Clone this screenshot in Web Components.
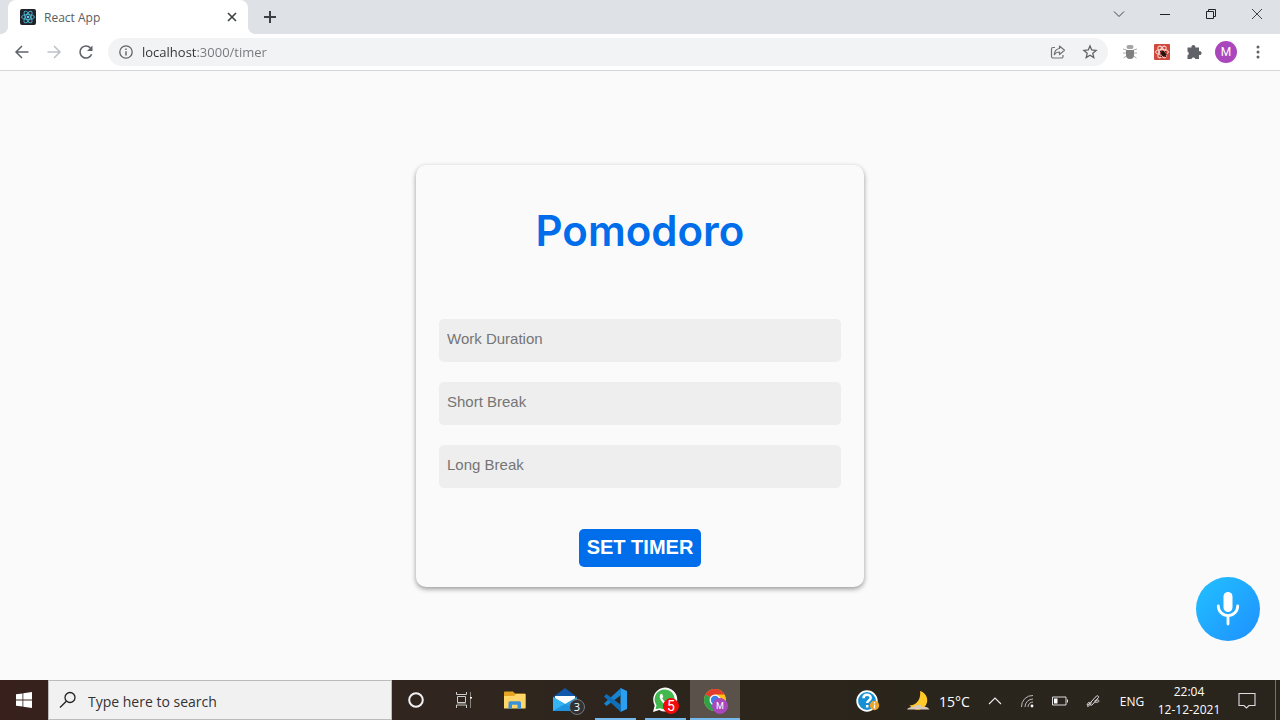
<!DOCTYPE html>
<html lang="en">
<head>
<meta charset="utf-8">
<title>React App</title>
<style>
  body {
    margin: 0;
    min-height: 100vh;
    display: flex;
    flex-direction: column;
    background: #fafafa;
    font-family: 'Open Sans', 'Noto Sans', sans-serif;
  }
</style>
</head>
<body>
<tab-strip>React App</tab-strip>
<browser-toolbar url="localhost:3000/timer"></browser-toolbar>
<timer-page>
  <timer-card heading="Pomodoro">
    <timer-field name="work" label="Work Duration"></timer-field>
    <timer-field name="short" label="Short Break"></timer-field>
    <timer-field name="long" label="Long Break"></timer-field>
    <span slot="action">SET TIMER</span>
  </timer-card>
</timer-page>
<task-bar>
  <task-app label="File Explorer" icon="explorer"></task-app>
  <task-app label="Mail" icon="mail" badge="3"></task-app>
  <task-app label="Visual Studio Code" icon="vscode" open></task-app>
  <task-app label="WhatsApp" icon="whatsapp" badge="5" alert open></task-app>
  <task-app label="Google Chrome" icon="chrome" badge="M" profile active></task-app>
</task-bar>

<script>
const svg = (w, h, body, attrs = '') =>
  `<svg width="${w}" height="${h}" viewBox="0 0 ${w} ${h}" fill="none" aria-hidden="true" ${attrs}>${body}</svg>`;

const icons = {
  react: svg(16, 16, `<rect width="16" height="16" rx="2" fill="#20232a"/><g stroke="#4fb4d0" stroke-width=".9"><ellipse cx="8" cy="8" rx="6.5" ry="2.5"/><ellipse cx="8" cy="8" rx="6.5" ry="2.5" transform="rotate(60 8 8)"/><ellipse cx="8" cy="8" rx="6.5" ry="2.5" transform="rotate(120 8 8)"/></g><circle cx="8" cy="8" r="1.3" fill="#5ed3f3"/>`),
  close: svg(10, 10, `<path d="M1 1l8 8M9 1L1 9" stroke="#3c4043" stroke-width="1.6"/>`),
  plus: svg(12, 12, `<path d="M6 0v12M0 6h12" stroke="#3c4043" stroke-width="2"/>`),
  chevron: svg(12, 8, `<path d="M1 1.5l5 5 5-5" stroke="#444"/>`),
  minimize: svg(10, 10, `<path d="M0 5.5h10" stroke="#222"/>`),
  restore: svg(12, 12, `<path d="M1.5 3.5h7v7h-7zM3.5 3.5v-2h7v7h-2" stroke="#222"/>`),
  exit: svg(12, 12, `<path d="M1 1l10 10M11 1L1 11" stroke="#444"/>`),
  back: svg(16, 16, `<path d="M14.5 8H2.5M8 2L2 8l6 6" stroke="#5f6368" stroke-width="1.5"/>`),
  forward: svg(16, 16, `<path d="M1.5 8h12M8 2l6 6-6 6" stroke="#bdc1c6" stroke-width="1.5"/>`),
  reload: svg(16, 16, `<path d="M13.6 10.2A6 6 0 1 1 12.4 3.9" stroke="#5f6368" stroke-width="1.6"/><path d="M14.5 1.500v5.500H9z" fill="#5f6368"/>`),
  info: svg(14, 14, `<circle cx="7" cy="7" r="6.2" stroke="#5f6368" stroke-width="1.3"/><path d="M7 6.2v4.300M7 3.500v1.500" stroke="#5f6368" stroke-width="1.4"/>`),
  share: svg(16, 16, `<path d="M5 3.5H3A1.5 1.5 0 0 0 1.500 5v7.500A1.500 1.500 0 0 0 3 14h8.500a1.500 1.500 0 0 0 1.500-1.500V11" stroke="#70747a" stroke-width="1.2"/><path d="M9.500 2l5 4.300-5 4.200V8C7 8 5.500 8.800 4.300 10.700 4.500 7.500 6.200 5 9.500 4.500z" stroke="#70747a" stroke-width="1.2" stroke-linejoin="round"/>`),
  star: svg(16, 16, `<path d="M8 2l1.700 4 4.400.4-3.300 2.900 1 4.300L8 11.300l-3.800 2.300 1-4.300-3.300-2.900L6.300 6z" stroke="#5f6368" stroke-width="1.300"/>`),
  bug: svg(16, 16, `<path d="M4.500 6L1 5M4 9H1M4.500 12l-3 2M11.500 6L15 5M12 9h3M11.500 12l3 2" stroke="#aaa"/><rect x="4.500" y="1" width="7" height="4" rx="2" fill="#a5a5a5"/><path d="M4 6h8v5a4 4 0 0 1-8 0z" fill="#808080"/>`),
  reactDev: svg(16, 16, `<rect width="16" height="16" rx="1" fill="#d1483b"/><g stroke="#f8d8d4"><ellipse cx="8" cy="8" rx="6.500" ry="2.600"/><ellipse cx="8" cy="8" rx="6.500" ry="2.600" transform="rotate(60 8 8)"/><ellipse cx="8" cy="8" rx="6.500" ry="2.600" transform="rotate(120 8 8)"/></g><path d="M6 7l6 6M12 7l-5 6M6 10h7" stroke="#2a1210"/><ellipse cx="9.500" cy="9.700" rx="2.200" ry="3" transform="rotate(-35 9.500 9.700)" fill="#2a1210"/>`),
  puzzle: svg(16, 16, `<path d="M2 3.500h3.500a2 2 0 1 1 3.800 0H13V7.200a2 2 0 1 1 0 3.800v4H9.300a2 2 0 0 0-3.800 0H1.500v-3.700a2 2 0 0 0 0-3.700V3.500z" fill="#5f6368"/>`),
  dots: svg(4, 16, `<g fill="#5f6368"><circle cx="2" cy="3" r="1.500"/><circle cx="2" cy="8" r="1.500"/><circle cx="2" cy="13" r="1.500"/></g>`),
  mic: svg(24, 36, `<rect x="7.500" y="1" width="9" height="20" rx="4.500" fill="#fff"/><path d="M2.300 15a9.700 9.700 0 0 0 19.400 0M12 25v8" stroke="#fff" stroke-width="2.800" stroke-linecap="round"/>`),
  windows: svg(16, 16, `<path d="M0 2.300L6.500 1.400v6.200H0zM7.300 1.300L16 0v7.600H7.300zM0 8.400h6.500v6.200L0 13.700zM7.300 8.400H16V16l-8.700-1.300z" fill="#fff"/>`),
  search: svg(18, 18, `<circle cx="11" cy="6.500" r="5" stroke="#222" stroke-width="1.300"/><path d="M7.300 10.200L1 16.500" stroke="#222" stroke-width="1.300"/>`),
  cortana: svg(18, 18, `<circle cx="9" cy="9" r="6.800" stroke="#f2f2f2" stroke-width="2"/>`),
  taskView: svg(18, 18, `<path d="M1.500 1v2.500h10V1M2.500 5.500h8v6h-8zM1.500 17v-3h10v3" stroke="#ccc"/><path d="M2 12h9v2H2z" fill="#77706a"/><path d="M15.500 1v16" stroke="#8b857f"/><path d="M15 6h2v1.500h-2z" fill="#fff"/>`),
  explorer: svg(22, 18, `<path d="M0 1.500A1 1 0 0 1 1 .5h8l2 2h9.500a1 1 0 0 1 1 1V17H0z" fill="#e5a523"/><path d="M0 5h10l2-2h9.500v14.500H0z" fill="#ffd667"/><path d="M4.500 17.800v-6A1.500 1.500 0 0 1 6 10.300h9.500a1.500 1.500 0 0 1 1.500 1.500v6h-3.500v-4H8v4z" fill="#3c91d7"/>`),
  mail: svg(26, 24, `<path d="M1 9L13 0l12 9v4H1z" fill="#0d58a8"/><path d="M3 8h20v9H3z" fill="#fff"/><path d="M1 9l12 7 12-7v14H1z" fill="#2aa3e8"/><path d="M1 23V9l12 7z" fill="#35b4f2"/><path d="M1 23l12-7 12 7z" fill="#1f93dd"/>`),
  vscode: svg(26, 26, `<path d="M18.500 1L25 4v18l-6.500 3z" fill="#2a9ff0"/><path d="M19 1L2 16.500l2.500 2.500L19 8z" fill="#1684d0"/><path d="M19 25L2 9.500 4.500 7 19 18z" fill="#0f70b7"/>`),
  whatsapp: svg(26, 26, `<path d="M1 25l1.700-6.600A12 12 0 1 1 7.200 23z" fill="#fff"/><path d="M3.500 22.300l1-4A10 10 0 1 1 8 21.300z" fill="#41b94e"/><path d="M8.300 7.200c.8-.9 1.700-.7 2.100.3l.8 2c.2.600-.9 1.500-.9 1.800 1 2.100 2.500 3.500 4.600 4.200.5-.2 1.200-1.600 1.900-1.300l2.100 1c1 .6.300 2.300-.9 2.900-4.500 2-12.600-6.300-9.700-10.900z" fill="#fff"/>`),
  chrome: svg(24, 24, `<circle cx="12" cy="12" r="11" fill="#fbc116"/><path d="M12 12L2.500 6.500A11 11 0 0 1 21.500 6.500H12z" fill="#e33b2e"/><path d="M12 12L2.500 6.500A11 11 0 0 0 11 23l5-8.500z" fill="#2ba24c"/><circle cx="12" cy="12" r="5.500" fill="#fff"/><circle cx="12" cy="12" r="4.200" fill="#3f7ee8"/>`),
  help: svg(24, 24, `<circle cx="11" cy="12" r="9.800" fill="#168fd4" stroke="#fff" stroke-width="1.800"/><path d="M7.500 9.300c0-4.600 7.200-4.600 7.200-.5 0 2.600-3.500 2.700-3.500 5.200M11.200 16v2.500" stroke="#fff" stroke-width="2.500"/><circle cx="18.500" cy="16.500" r="4.700" fill="#e9a52b"/><path d="M18.500 15.500v4M18.500 13v1.500" stroke="#fff" stroke-width="1.300"/>`),
  moon: svg(24, 20, `<path d="M13 0a9.500 9.500 0 1 1-10.500 14C8 15.500 14.500 9 13 0z" fill="#ffc928"/><path d="M0 18.500c1-2 5-3 6.500-2 2-3.500 7.500-3.500 9-.5 3-1 6 .5 7 2.500z" fill="#d9c9b8"/>`),
  caret: svg(14, 8, `<path d="M1 7l6-6 6 6" stroke="#eee" stroke-width="1.100"/>`),
  wifi: svg(14, 14, `<path d="M1.500 13A11 11 0 0 1 13 1.500M5 13a8 8 0 0 1 8-8M8 13a5 5 0 0 1 5-5" stroke="#bbb"/><circle cx="12" cy="12" r="1.400" fill="#fff"/>`),
  battery: svg(16, 10, `<path d="M.5 1h13.500v8H.5zM15.500 3.500v3" stroke="#ddd"/><path d="M2 2.500h3.500v5H2z" fill="#fff"/>`),
  pen: svg(14, 14, `<path d="M1 11c2-5 4-2 2.500 0-2 3.500-3.500.5 1-2.500l6-6.500c1-1 2.800.5 1.800 1.700L7 10c-3 3-3 .5-1.500-1.500M8.500 7c2-1.500 5-1 4.500.2-.5 1.300-2.500 1-4.500 1" stroke="#ddd"/>`),
  notice: svg(18, 18, `<path d="M1 1.500h16v12h-6L8.500 16 6 13.500H1z" stroke="#ddd" stroke-width="1.100"/>`)
};

const buttonReset = `
  * { box-sizing: border-box; }
  button {
    display: flex;
    align-items: center;
    justify-content: center;
    flex: none;
    margin: 0;
    padding: 0;
    border: 0;
    background: none;
    font: inherit;
    color: inherit;
  }
  svg { display: block; flex: none; }
`;

const iconButton = (name, label) =>
  `<button type="button" aria-label="${label}">${icons[name]}</button>`;

class TabStrip extends HTMLElement {
  constructor() {
    super();
    this.attachShadow({ mode: 'open' });
  }

  connectedCallback() {
    this.shadowRoot.innerHTML = `
      <style>
        ${buttonReset}
        :host {
          display: flex;
          flex: none;
          height: 34px;
          padding-left: 8px;
          background: #dee1e6;
        }
        .tab {
          position: relative;
          display: flex;
          align-items: center;
          gap: 8px;
          width: 240px;
          padding: 0 8px 0 12px;
          border-radius: 8px 8px 0 0;
          background: #fff;
          color: #5a5e62;
          font-size: 12px;
        }
        /* the flared feet of the active tab */
        .tab::before, .tab::after {
          content: '';
          position: absolute;
          bottom: 0;
          width: 8px;
          height: 8px;
        }
        .tab::before {
          right: 100%;
          background: radial-gradient(circle at 0 0, #dee1e6 8px, #fff 8px);
        }
        .tab::after {
          left: 100%;
          background: radial-gradient(circle at 100% 0, #dee1e6 8px, #fff 8px);
        }
        .title { flex: 1; }
        .tab button { width: 16px; height: 16px; }
        .new { width: 44px; }
        .controls { display: flex; margin-left: auto; height: 28px; }
        .controls button { width: 46px; }
      </style>
      <div class="tab">
        ${icons.react}
        <span class="title"><slot></slot></span>
        ${iconButton('close', 'Close tab')}
      </div>
      <button type="button" class="new" aria-label="New tab">${icons.plus}</button>
      <div class="controls">
        ${iconButton('chevron', 'Search tabs')}
        ${iconButton('minimize', 'Minimize')}
        ${iconButton('restore', 'Restore')}
        ${iconButton('exit', 'Close')}
      </div>
    `;
  }
}

class BrowserToolbar extends HTMLElement {
  constructor() {
    super();
    this.attachShadow({ mode: 'open' });
  }

  connectedCallback() {
    this.shadowRoot.innerHTML = `
      <style>
        ${buttonReset}
        :host {
          display: flex;
          flex: none;
          align-items: center;
          gap: 6px;
          box-sizing: border-box;
          height: 37px;
          padding: 0 6px;
          border-bottom: 1px solid #d5d7da;
          background: #fff;
        }
        .group { display: flex; }
        button { width: 32px; height: 28px; }
        .address {
          display: flex;
          flex: 1;
          align-items: center;
          height: 28px;
          padding: 0 2px 0 11px;
          border-radius: 14px;
          background: #f1f3f4;
        }
        /* host name dark, the rest of the address grey */
        input {
          flex: 1;
          min-width: 0;
          margin: 0 0 0 9px;
          padding: 0;
          border: 0;
          outline: 0;
          font: inherit;
          font-size: 13px;
          color: transparent;
          background: linear-gradient(90deg, #303337 55px, #74787c 55px);
          -webkit-background-clip: text;
          background-clip: text;
        }
        .avatar {
          display: grid;
          place-items: center;
          width: 22px;
          height: 22px;
          border-radius: 50%;
          background: #ab47bc;
          color: #fff;
          font: 12px Roboto, sans-serif;
        }
      </style>
      <div class="group">
        ${iconButton('back', 'Back')}
        ${iconButton('forward', 'Forward')}
        ${iconButton('reload', 'Reload')}
      </div>
      <div class="address">
        ${icons.info}
        <input type="text" aria-label="Address" value="${this.getAttribute('url')}">
        ${iconButton('share', 'Share')}
        ${iconButton('star', 'Bookmark')}
      </div>
      <div class="group">
        ${iconButton('bug', 'Debugger')}
        ${iconButton('reactDev', 'React Developer Tools')}
        ${iconButton('puzzle', 'Extensions')}
        <button type="button" aria-label="Profile"><span class="avatar">M</span></button>
        ${iconButton('dots', 'Menu')}
      </div>
    `;
  }
}

class TimerPage extends HTMLElement {
  constructor() {
    super();
    this.attachShadow({ mode: 'open' });
  }

  connectedCallback() {
    this.shadowRoot.innerHTML = `
      <style>
        ${buttonReset}
        :host {
          position: relative;
          display: flex;
          flex: 1;
          align-items: center;
          justify-content: center;
        }
        .mic {
          position: absolute;
          right: 20px;
          bottom: 39px;
          width: 64px;
          height: 64px;
          border-radius: 50%;
          background: linear-gradient(135deg, #22c1ff, #1e90ff);
        }
      </style>
      <slot></slot>
      <button type="button" class="mic" aria-label="Voice input">${icons.mic}</button>
    `;
  }
}

class TimerCard extends HTMLElement {
  constructor() {
    super();
    this.attachShadow({ mode: 'open' });
  }

  connectedCallback() {
    this.shadowRoot.innerHTML = `
      <style>
        :host {
          display: block;
          box-sizing: border-box;
          width: 35%;
          min-width: 320px;
          border-radius: 10px;
          box-shadow: 0 2px 5px rgba(0, 0, 0, 0.4);
        }
        form {
          display: flex;
          flex-direction: column;
          align-items: center;
          padding: 34px 23px 20px;
        }
        h1 {
          margin: 0 0 56px;
          color: #006eeb;
          font: 600 42px/64px Inter, sans-serif;
        }
        .fields {
          display: flex;
          flex-direction: column;
          gap: 20px;
          width: 100%;
          margin-bottom: 41px;
        }
        button {
          height: 38px;
          padding: 0 8px;
          border: 0;
          border-radius: 5px;
          background: #006eeb;
          color: #fff;
          font: bold 20px 'Liberation Sans', sans-serif;
        }
      </style>
      <form>
        <h1>${this.getAttribute('heading')}</h1>
        <div class="fields"><slot></slot></div>
        <button type="button"><slot name="action"></slot></button>
      </form>
    `;
  }
}

class TimerField extends HTMLElement {
  constructor() {
    super();
    this.attachShadow({ mode: 'open' });
  }

  connectedCallback() {
    const name = this.getAttribute('name');
    const label = this.getAttribute('label');

    this.shadowRoot.innerHTML = `
      <style>
        :host { display: block; }
        input {
          display: block;
          box-sizing: border-box;
          width: 100%;
          height: 43px;
          padding: 8px 8px 12px;
          border: 0;
          border-radius: 5px;
          background: #eee;
          font: 15px 'Liberation Sans', sans-serif;
        }
        input::placeholder { color: #757575; }
      </style>
      <input type="text" name="${name}" aria-label="${label}" placeholder="${label}">
    `;
  }
}

class TaskApp extends HTMLElement {
  constructor() {
    super();
    this.attachShadow({ mode: 'open' });
  }

  connectedCallback() {
    const badge = this.getAttribute('badge');

    this.shadowRoot.innerHTML = `
      <style>
        ${buttonReset}
        :host { display: block; width: 50px; height: 40px; }
        button { position: relative; width: 50px; height: 40px; }
        :host([open]) button::after, :host([active]) button::after {
          content: '';
          position: absolute;
          bottom: 0;
          left: 5px;
          right: 4px;
          height: 2px;
          background: #76b9ed;
        }
        :host([active]) button { background: #5a514b; }
        :host([active]) button::after { left: 0; right: 0; }
        .badge {
          position: absolute;
          left: 29px;
          top: 19px;
          display: grid;
          place-items: center;
          width: 16px;
          height: 16px;
          border: 1px solid #77777a;
          border-radius: 50%;
          background: #303236;
          color: #fff;
          font-size: 11px;
          line-height: 14px;
        }
        :host([alert]) .badge {
          left: 23px;
          top: 18px;
          border-color: #f00a0a;
          background: #f00a0a;
          font: 14px/14px Roboto, sans-serif;
        }
        :host([profile]) .badge {
          left: 22px;
          top: 18px;
          border-color: #ab47bc;
          background: #ab47bc;
          font: 9px/14px Roboto, sans-serif;
        }
      </style>
      <button type="button" aria-label="${this.getAttribute('label')}">
        ${icons[this.getAttribute('icon')]}
        ${badge ? `<span class="badge">${badge}</span>` : ''}
      </button>
    `;
  }
}

class TaskBar extends HTMLElement {
  constructor() {
    super();
    this.attachShadow({ mode: 'open' });
  }

  connectedCallback() {
    this.shadowRoot.innerHTML = `
      <style>
        ${buttonReset}
        :host {
          display: flex;
          flex: none;
          height: 40px;
          background: linear-gradient(90deg, #38211d, #30261f 35%, #2b251c 60%, #29251d);
          color: #fff;
        }
        button { width: 32px; }
        .wide { width: 48px; }
        .search {
          display: flex;
          align-items: center;
          gap: 11px;
          flex: 0 1 344px;
          padding: 0 10px;
          border: 1px solid #bbb;
          background: #f1f1f1;
        }
        input {
          flex: 1;
          min-width: 0;
          padding: 2px 0 0;
          border: 0;
          background: none;
          font: inherit;
          font-size: 14px;
        }
        input::placeholder { color: #333; }
        .apps { display: flex; margin-left: 2px; }
        .tray { display: flex; margin-left: auto; }
        .tray button { padding-top: 2px; }
        .weather {
          gap: 8px;
          width: 72px;
          margin-left: 15px;
          justify-content: flex-start;
          font-size: 14px;
        }
        .battery { width: 34px; }
        .lang { width: 46px; font-size: 12px; }
        .clock {
          flex-direction: column;
          width: 68px;
          font-size: 12px;
          line-height: 18px;
        }
        .desktop { width: 5px; margin-left: 4px; border-left: 1px solid #77736d; }
      </style>
      <button type="button" class="wide" aria-label="Start">${icons.windows}</button>
      <label class="search">
        ${icons.search}
        <input type="text" aria-label="Search" placeholder="Type here to search">
      </label>
      <button type="button" class="wide" aria-label="Cortana">${icons.cortana}</button>
      <button type="button" class="wide" aria-label="Task view">${icons.taskView}</button>
      <div class="apps"><slot></slot></div>
      <div class="tray">
        <button type="button" class="wide" aria-label="Get help">${icons.help}</button>
        <button type="button" class="weather">${icons.moon}<span>15°C</span></button>
        ${iconButton('caret', 'Show hidden icons')}
        ${iconButton('wifi', 'Network')}
        <button type="button" class="battery" aria-label="Battery">${icons.battery}</button>
        ${iconButton('pen', 'Ink workspace')}
        <button type="button" class="lang">ENG</button>
        <button type="button" class="clock"><span>22:04</span><span>12-12-2021</span></button>
        <button type="button" class="wide" aria-label="Notifications">${icons.notice}</button>
        <button type="button" class="desktop" aria-label="Show desktop"></button>
      </div>
    `;
  }
}

customElements.define('tab-strip', TabStrip);
customElements.define('browser-toolbar', BrowserToolbar);
customElements.define('timer-page', TimerPage);
customElements.define('timer-card', TimerCard);
customElements.define('timer-field', TimerField);
customElements.define('task-app', TaskApp);
customElements.define('task-bar', TaskBar);
</script>
</body>
</html>
